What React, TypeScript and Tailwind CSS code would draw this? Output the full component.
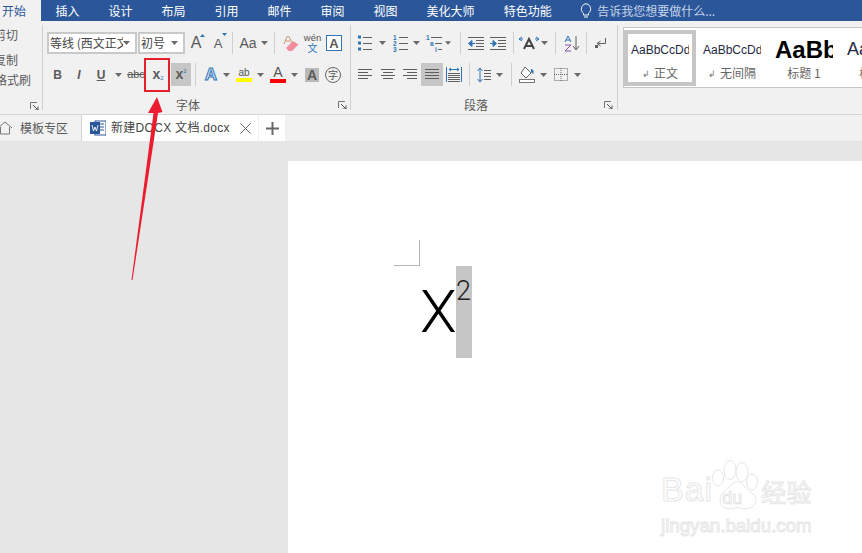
import React from "react";

const G = "#5f5f5f";
const B = "#2e75b6";
const Sv = ({ w, h, children }: { w: number; h: number; children: React.ReactNode }) => (
  <svg width={w} height={h} viewBox={`0 0 ${w} ${h}`} fill="none" className="block">{children}</svg>
);
const Caret = () => <Sv w={7} h={4}><path d="M0 0H7L3.5 4Z" fill="#6a6a6a" /></Sv>;
const Btn = ({ w, ml = 0, children, on }: { w: number; ml?: number; children?: React.ReactNode; on?: boolean }) => (
  <div className={`flex h-full items-center justify-center ${on ? "bg-[#c6c6c6]" : ""}`} style={{ width: w, marginLeft: ml }}>{children}</div>
);
const Sep = ({ ml = 0 }: { ml?: number }) => <div className="h-full w-px bg-[#d0d0d0]" style={{ marginLeft: ml }} />;
const Launcher = () => (
  <Sv w={9} h={8}>
    <path d="M0.5 7V0.5H7" stroke="#777" />
    <path d="M3 3L8 8M8 4.5V8H4.5" stroke="#555" />
  </Sv>
);
const Combo = ({ w, text }: { w: number; text: string }) => (
  <div className="flex h-full items-center border-2 border-[#c9c9c9] bg-white pl-[1px] pr-[5px] text-[12px] text-[#444]" style={{ width: w }}>
    <span className="flex-1 overflow-hidden whitespace-nowrap">{text}</span>
    <Caret />
  </div>
);
const lines = (ys: number[], x1: (i: number) => number, x2: (i: number) => number, c = G) =>
  ys.map((y, i) => <path key={i} d={`M${x1(i)} ${y + 0.5}H${x2(i)}`} stroke={c} />);
const Align = ({ kind }: { kind: "l" | "c" | "r" | "j" }) => {
  const long = 14;
  const short = 10;
  return (
    <Sv w={14} h={11}>
      {[1, 4, 7, 10].map((y, i) => {
        const len = kind === "j" ? long : i % 2 ? short : long;
        const x = kind === "l" || kind === "j" ? 0 : kind === "r" ? 14 - len : (14 - len) / 2;
        return <path key={y} d={`M${x} ${y - 0.5}H${x + len}`} stroke={G} />;
      })}
    </Sv>
  );
};
const ListIcon = () => (
  <Sv w={14} h={16}>
    {[2, 8, 14].map((y) => <rect key={y} x={0} y={y - 1.5} width={3} height={3} fill={B} />)}
    {lines([2, 8, 14], () => 5, () => 14)}
  </Sv>
);
const NumIcon = () => (
  <Sv w={15} h={17}>
    {["1", "2", "3"].map((t, i) => (
      <text key={t} x={0} y={5 + i * 6} fontSize={6.5} fontWeight={700} fill={B} fontFamily="Liberation Sans">{t}</text>
    ))}
    {lines([2, 8, 14], () => 6, () => 15)}
  </Sv>
);
const MultiIcon = () => (
  <Sv w={16} h={17}>
    {["1", "a", "i"].map((t, i) => (
      <text key={t} x={[0, 4, 9][i]} y={5 + i * 6} fontSize={6.5} fontWeight={700} fill={B} fontFamily="Liberation Sans">{t}</text>
    ))}
    {lines([2, 8, 14], (i) => [5, 9, 12][i], () => 16)}
  </Sv>
);
const Indent = ({ right }: { right?: boolean }) => (
  <Sv w={16} h={15}>
    {lines([1, 13], () => 0, () => 16)}
    {lines([4, 7, 10], () => 8, () => 16)}
    <path d={right ? "M0 7.5H5M3 4.5L6.5 7.5L3 10.5Z" : "M7 7.5H2M4 4.5L0.5 7.5L4 10.5Z"} stroke={B} fill={B} />
  </Sv>
);
const GrayA = ({ size = 15, weight = 400 }: { size?: number; weight?: number }) => (
  <span className="font-['Liberation_Sans',sans-serif] leading-none text-[#5a5a5a]" style={{ fontSize: size, fontWeight: weight }}>A</span>
);

const Row1Font = () => (
  <div className="flex h-[22px]">
    <Combo w={90} text="等线 (西文正文)" />
    <div className="w-px" />
    <Combo w={47} text="初号" />
    <Btn w={22}>
      <div className="relative"><GrayA size={16} /><span className="absolute -right-[4px] top-0"><Sv w={5} h={3}><path d="M0 3L2.5 0L5 3Z" fill={B} /></Sv></span></div>
    </Btn>
    <Btn w={22}>
      <div className="relative"><GrayA size={13} /><span className="absolute -right-[5px] -top-[1px]"><Sv w={5} h={3}><path d="M0 0L2.5 3L5 0Z" fill={B} /></Sv></span></div>
    </Btn>
    <Sep ml={3} />
    <Btn w={41}>
      <span className="mr-[4px] font-['Liberation_Sans',sans-serif] text-[14px] text-[#5a5a5a]">Aa</span>
      <Caret />
    </Btn>
    <Sep />
    <Btn w={26}>
      <span className="ml-[6px]">
        <Sv w={16} h={17}>
          <path d="M1 9L4 1.5H6L9 8M2.5 6H7" stroke="#c89a70" />
          <path d="M3 13L10 6L15.5 9.5L9 16H5.5Z" fill="#f08ea0" />
        </Sv>
      </span>
    </Btn>
    <Btn w={23}>
      <div className="flex flex-col items-center leading-none">
        <span className="font-['Liberation_Sans',sans-serif] text-[9.5px] text-[#555]">wén</span>
        <span className="font-['Noto_Sans_CJK_SC',sans-serif] text-[10px] text-[#2e75b6]">文</span>
      </div>
    </Btn>
    <Btn w={20}>
      <div className="flex h-[16px] w-[16px] items-center justify-center border border-[#2e75b6] bg-white"><GrayA size={13} weight={700} /></div>
    </Btn>
  </div>
);

const Row2Font = () => (
  <div className="mt-[9px] flex h-[23px] font-['Liberation_Sans',sans-serif] text-[#5a5a5a]">
    <Btn w={21}><span className="text-[12px] font-bold">B</span></Btn>
    <Btn w={22}><span className="text-[12px] font-bold italic">I</span></Btn>
    <Btn w={22}><span className="text-[12px] font-bold underline">U</span></Btn>
    <Btn w={12}><Caret /></Btn>
    <Btn w={24}><span className="text-[11px] line-through">abc</span></Btn>
    <Btn w={20}><span className="text-[14px] font-bold">x</span><span className="mt-[8px] text-[6px] text-[#2e75b6]">2</span></Btn>
    <Btn w={20} ml={3} on><span className="text-[14px] font-bold">x</span><span className="mb-[7px] text-[6px] text-[#2e75b6]">2</span></Btn>
    <Sep ml={4} />
    <Btn w={22} ml={4}>
      <span className="text-[17px] font-bold leading-none text-[#dce9f7] [-webkit-text-stroke:1px_#2e75b6]">A</span>
    </Btn>
    <Btn w={8}><Caret /></Btn>
    <Btn w={24} ml={2}>
      <div className="flex flex-col items-center">
        <span className="text-[10px] leading-[11px] text-[#555]">ab</span>
        <div className="h-[4px] w-[16px] bg-[#ffff00]" />
      </div>
    </Btn>
    <Btn w={8}><Caret /></Btn>
    <Btn w={24} ml={2}>
      <div className="flex flex-col items-center">
        <span className="text-[14px] leading-[13px] text-[#555]">A</span>
        <div className="h-[4px] w-[16px] bg-[#ff0000]" />
      </div>
    </Btn>
    <Btn w={8}><Caret /></Btn>
    <Btn w={20} ml={4}>
      <div className="flex h-[14px] w-[14px] items-center justify-center bg-[#b9b9b9]"><GrayA size={14} weight={700} /></div>
    </Btn>
    <Btn w={20} ml={1}>
      <div className="flex h-[16px] w-[16px] items-center justify-center rounded-full border border-[#666] font-['Noto_Sans_CJK_SC',sans-serif] text-[10px] leading-none text-[#555]">字</div>
    </Btn>
  </div>
);

const Row1Para = () => (
  <div className="flex h-[22px]">
    <Btn w={22}><ListIcon /></Btn>
    <Btn w={8} ml={2}><Caret /></Btn>
    <Btn w={22} ml={3}><NumIcon /></Btn>
    <Btn w={8} ml={1}><Caret /></Btn>
    <Btn w={22} ml={3}><MultiIcon /></Btn>
    <Btn w={6}><Caret /></Btn>
    <Sep ml={9} />
    <Btn w={20} ml={5}><Indent /></Btn>
    <Btn w={20} ml={2}><Indent right /></Btn>
    <Sep ml={5} />
    <Btn w={22} ml={4}>
      <Sv w={20} h={14}>
        <path d="M5 13L10 3L15 13M7 10H13" stroke="#444" strokeWidth={2} />
        <path d="M0 3H4M0 3L3 1M0 3L3 5M20 3H16M20 3L17 1M20 3L17 5" stroke={B} />
      </Sv>
    </Btn>
    <Btn w={8}><Caret /></Btn>
    <Sep ml={7} />
    <Btn w={20} ml={6}>
      <Sv w={16} h={17}>
        <path d="M1 7L4 1L7 7M2 5H6" stroke={B} />
        <path d="M1 10H7L1 16H7" stroke="#8a4fa8" />
        <path d="M12 1V14M9 11L12 15L15 11" stroke={G} />
      </Sv>
    </Btn>
    <Sep ml={4} />
    <Btn w={14} ml={7}>
      <Sv w={12} h={11}>
        <path d="M10.5 0V5.5H3M5.5 3L2 5.5L5.5 8" stroke={G} />
        <rect x={0} y={7} width={3} height={3} fill={G} />
      </Sv>
    </Btn>
  </div>
);

const Row2Para = () => (
  <div className="mt-[9px] flex h-[23px]">
    <Btn w={22}><Align kind="l" /></Btn>
    <Btn w={22} ml={1}><Align kind="c" /></Btn>
    <Btn w={22}><Align kind="r" /></Btn>
    <Btn w={22} on><Align kind="j" /></Btn>
    <Btn w={20} ml={1}>
      <Sv w={16} h={15}>
        <path d="M0.5 0V15M15.5 0V15" stroke={B} />
        <path d="M3 2.5H13M3 2.5L5 1M3 2.5L5 4M13 2.5L11 1M13 2.5L11 4" stroke={B} />
        {lines([6, 8, 10, 12, 14], () => 2, () => 14)}
      </Sv>
    </Btn>
    <Sep ml={5} />
    <Btn w={20} ml={4}>
      <Sv w={14} h={16}>
        <path d="M3 1V15M0.5 4L3 1L5.5 4M0.5 12L3 15L5.5 12" stroke={B} />
        {lines([3, 6, 9, 12], () => 7, () => 14)}
      </Sv>
    </Btn>
    <Btn w={8} ml={1}><Caret /></Btn>
    <Sep ml={8} />
    <Btn w={22} ml={4}>
      <Sv w={16} h={17}>
        <path d="M6 1L12 7L7 12L2 7Z" fill="#fff" stroke="#666" />
        <path d="M12 3C15 3 15 7 14 8L12 6Z" fill={B} />
        <rect x={0.5} y={13.5} width={15} height={3} fill="#fff" stroke="#777" />
      </Sv>
    </Btn>
    <Btn w={8} ml={1}><Caret /></Btn>
    <Btn w={22} ml={3}>
      <Sv w={14} h={13}>
        <rect x={0.5} y={0.5} width={13} height={12} stroke="#666" strokeDasharray="1 1" />
        <path d="M7 0V13M0 6.5H14" stroke="#666" strokeDasharray="1 1" />
      </Sv>
    </Btn>
    <Btn w={8} ml={1}><Caret /></Btn>
  </div>
);

const Style = ({ sel, preview, label, cls }: { sel?: boolean; preview: string; label: React.ReactNode; cls: string }) => (
  <div className={`flex h-[56px] w-[72px] shrink-0 flex-col items-center border-[4px] ${sel ? "border-[#c6c6c6]" : "border-transparent"}`}>
    <div className={`flex h-[32px] w-[58px] items-center overflow-hidden whitespace-nowrap font-['Liberation_Sans',sans-serif] ${cls}`}>{preview}</div>
    <div className="flex h-[15px] items-center whitespace-nowrap text-[12px] leading-none text-[#666]">{label}</div>
  </div>
);

const Ret = () => <span className="mr-[4px] text-[9px] text-[#777]">↲</span>;

export default function App() {
  return (
    <div className="relative h-[553px] w-[862px] overflow-hidden bg-[#e6e6e6] font-['Noto_Sans_CJK_SC',sans-serif] text-[12px]">
      {/* title tabs */}
      <div className="flex h-[21px] items-center bg-[#2b579a] leading-none text-white">
        <div className="flex h-full w-[41px] items-center bg-[#f1f1f1] pl-[2px] text-[#2b579a]">开始</div>
        <div className="flex">
          {["插入", "设计", "布局", "引用", "邮件", "审阅", "视图", "美化大师", "特色功能"].map((t) => (
            <span key={t} className="px-[14.5px]">{t}</span>
          ))}
        </div>
        <span className="ml-[14px] mr-[5px]">
          <Sv w={12} h={15}>
            <path d="M3.5 10.5C1 8 1 5.5 2 3.5C4 0 8 0 10 3.5C11 5.5 11 8 8.5 10.5V12H3.5Z" stroke="#fff" />
            <path d="M4 14H8" stroke="#fff" />
          </Sv>
        </span>
        <span className="text-[#c5d4ea]">告诉我您想要做什么...</span>
      </div>

      {/* ribbon */}
      <div className="flex h-[94px] items-start border-b border-[#d5d5d5] bg-[#f1f1f1] text-[#5a5a5a]">
        <div className="mt-[4px] flex h-[85px] w-[43px] shrink-0 flex-col border-r border-[#d0d0d0]">
          <div className="-ml-[6px] flex h-[66px] flex-col justify-between leading-[20px]">
            <span>剪切</span>
            <span className="mt-[4px]">复制</span>
            <span className="ml-[1px]">格式刷</span>
          </div>
          <div className="ml-[30px] mt-[12px]"><Launcher /></div>
        </div>

        <div className="relative mt-[4px] h-[85px] w-[308px] shrink-0 border-r border-[#d0d0d0] pl-[4px] pt-[7px]">
          <Row1Font />
          <Row2Font />
          <div className="mt-[10px] flex items-center pr-[3px] leading-[18px]">
            <span className="ml-[129px] flex-1 text-[12px]">字体</span>
            <Launcher />
          </div>
        </div>

        <div className="mt-[4px] h-[85px] w-[267px] shrink-0 border-r border-[#d0d0d0] pl-[3px] pt-[7px]">
          <Row1Para />
          <Row2Para />
          <div className="mt-[10px] flex items-center pr-[4px] leading-[18px]">
            <span className="ml-[110px] flex-1 text-[12px]">段落</span>
            <Launcher />
          </div>
        </div>

        <div className="ml-[5px] mt-[6px] flex h-[61px] flex-1 items-center overflow-hidden border-y border-l border-[#c6c6c6] bg-white">
          <Style sel preview="AaBbCcDd" cls="text-[12px] text-[#1f2a44]" label={<><Ret />正文</>} />
          <Style preview="AaBbCcDd" cls="text-[12px] text-[#1f2a44]" label={<><Ret />无间隔</>} />
          <Style preview="AaBbC" cls="text-[24px] font-bold text-black" label="标题 1" />
          <Style preview="AaBb" cls="text-[18px] text-[#1f2a44]" label="标题 2" />
        </div>
      </div>

      {/* document tabs */}
      <div className="flex h-[26px] bg-[#f1f1f1] text-[#5a5a5a]">
        <div className="flex h-full w-[82px] items-center border-r border-[#d5d5d5]">
          <span className="-ml-[2px] mr-[8px]">
            <Sv w={14} h={14}>
              <path d="M0 7L7 1L14 7M2.5 6V13H11.5V6" stroke="#777" />
            </Sv>
          </span>
          <span>模板专区</span>
        </div>
        <div className="flex h-[26px] w-[176px] items-center bg-white pl-[8px] text-[#444]">
          <span className="mr-[5px]">
            <Sv w={16} h={16}>
              <rect x={5} y={1} width={11} height={14} fill="#fff" stroke="#2b579a" />
              <path d="M8 4H14M8 7H14M8 10H14" stroke="#2b579a" />
              <rect x={0} y={2} width={10} height={12} fill="#2b579a" />
              <path d="M2 5L3.5 11L5 7L6.5 11L8 5" stroke="#fff" strokeWidth={0.9} />
            </Sv>
          </span>
          <span className="whitespace-nowrap font-['Liberation_Sans','Noto_Sans_CJK_SC',sans-serif] tracking-[0.3px]">新建DOCX 文档.docx</span>
          <span className="ml-[10px]">
            <Sv w={11} h={11}><path d="M0.5 0.5L10.5 10.5M10.5 0.5L0.5 10.5" stroke="#666" /></Sv>
          </span>
        </div>
        <div className="ml-px flex h-full w-[26px] items-center justify-center bg-white">
          <Sv w={13} h={13}><path d="M6.5 0V13M0 6.5H13" stroke="#666" strokeWidth={2} /></Sv>
        </div>
      </div>

      {/* page */}
      <div className="ml-[288px] mt-[20px] h-[400px] bg-white pl-[106px] pt-[79px]">
        <div className="h-[26px] w-[26px] border-b border-r border-[#b5b5b5]" />
        <div className="ml-[26px] flex h-[92px] font-['Roboto',sans-serif] font-light text-black">
          <span className="w-[36px] text-[60px] leading-[92px]">X</span>
          <span className="h-[92px] w-[16px] bg-[#c6c6c6] text-[27px] leading-[50px] text-[#222]">2</span>
        </div>
      </div>

      {/* annotations */}
      <div className="absolute left-[144px] top-[58px] h-[34px] w-[26px] border-2 border-[#e4202c]" />
      <svg className="absolute left-0 top-0" width="862" height="553" viewBox="0 0 862 553" fill="none">
        <path d="M157 97L148 113L153.5 113L131.5 280L132.5 280L158 113L162.5 112Z" fill="#ec1c2e" />
      </svg>

      {/* watermark */}
      <div className="absolute left-[661px] top-[460px] flex flex-col font-['Liberation_Sans',sans-serif] text-white">
        <div className="flex items-end">
          <span className="mb-[3px] text-[34px] leading-[36px] tracking-[1px] [-webkit-text-stroke:1px_#e6e6e6]">Bai</span>
          <span className="relative -ml-[1px]">
            <Sv w={48} h={50}>
              <g stroke="#e6e6e6" fill="#fff">
                <ellipse cx={6} cy={18} rx={5.5} ry={8} />
                <ellipse cx={18} cy={10} rx={6} ry={9.5} />
                <ellipse cx={30} cy={12} rx={6} ry={9.5} />
                <ellipse cx={40} cy={22} rx={5.5} ry={8} />
                <path d="M8 40C8 32 16 30 20 24C24 20 30 22 32 26C36 32 44 34 44 40C44 50 30 50 26 47C20 50 8 50 8 40Z" />
              </g>
            </Sv>
            <span className="absolute left-[10px] top-[29px] text-[18px] leading-none [-webkit-text-stroke:1px_#e6e6e6]">du</span>
          </span>
          <span className="mb-[2px] ml-[1px] font-['Noto_Sans_CJK_SC',sans-serif] text-[25px] leading-[34px] [-webkit-text-stroke:1px_#e6e6e6]">经验</span>
        </div>
        <span className="mt-[6px] text-[18.7px] leading-[20px] [-webkit-text-stroke:1px_#e6e6e6]">jingyan.baidu.com</span>
      </div>
    </div>
  );
}
